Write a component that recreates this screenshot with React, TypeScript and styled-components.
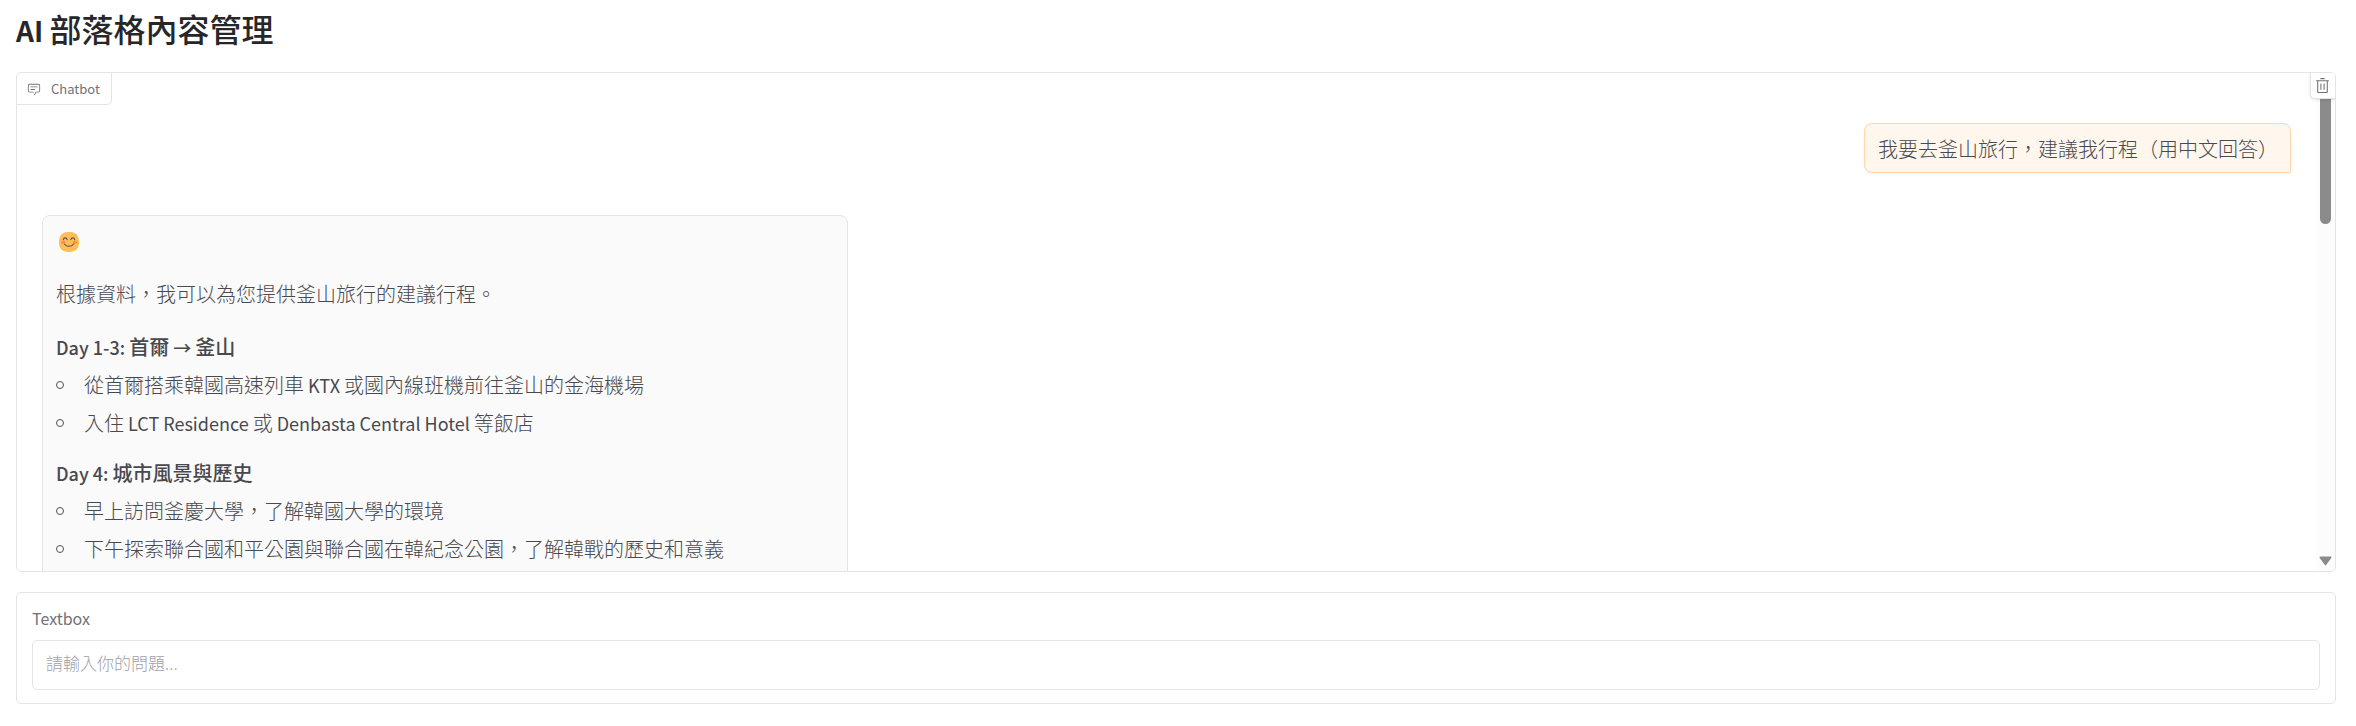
import React from "react";
import styled, { createGlobalStyle } from "styled-components";

const GlobalStyle = createGlobalStyle`
  *, *::before { box-sizing: border-box; }
  body {
    margin: 0;
    background: #fff;
    color: #27272a;
    font-family: "Noto Sans CJK TC", "Noto Sans", sans-serif;
    font-size: 20px;
  }
`;

const Page = styled.main`
  display: flex;
  flex-direction: column;
  gap: 20px;
  padding: 7px 20px 20px 16px;
`;

const Title = styled.h1`
  margin: 0 0 3px;
  font-size: 32px;
  line-height: 42px;
  font-weight: 500;
`;

const TitleLatin = styled.span`
  font-size: 28px;
  line-height: 0;
  font-weight: 600;
`;

const Panel = styled.section`
  position: relative;
  border: 1px solid #e4e4e7;
  border-radius: 5px;
  background: #fff;
  overflow: hidden;
`;

const ChatPanel = styled(Panel)`
  display: flex;
  height: 500px;
`;

const PanelLabel = styled.div`
  position: absolute;
  top: 0;
  left: 0;
  display: flex;
  align-items: center;
  gap: 10px;
  height: 32px;
  padding: 0 11px 0 10px;
  border: solid #e4e4e7;
  border-width: 0 1px 1px 0;
  border-radius: 0 0 5px 0;
  color: #71717a;
  font-size: 13px;
  line-height: 20px;
`;

const ClearButton = styled.button`
  position: absolute;
  top: 0;
  right: 0;
  display: flex;
  align-items: center;
  justify-content: center;
  width: 25px;
  height: 26px;
  padding: 0 2px 0 0;
  border: solid #e4e4e7;
  border-width: 0 0 1px 1px;
  border-radius: 0 0 0 5px;
  background: #fff;
  color: #71717a;
  box-shadow: 0 1px 3px rgba(0, 0, 0, 0.12);
  cursor: pointer;
`;

const Messages = styled.div`
  flex: 1;
  min-width: 0;
  display: flex;
  flex-direction: column;
  gap: 42px;
  padding: 50px 25px 0;
`;

const Bubble = styled.article`
  flex: none;
  padding: 13px 12px 11px 13px;
  border: 1px solid;
  color: #48484f;
  line-height: 24px;
  font-weight: 300;
`;

const UserBubble = styled(Bubble)`
  align-self: flex-end;
  border-color: #fed7aa;
  border-radius: 8px 8px 0 8px;
  background: #fff7ed;
  box-shadow: 0 1px 3px rgba(0, 0, 0, 0.05);
`;

const BotBubble = styled(Bubble)`
  align-self: flex-start;
  width: 100%;
  max-width: 806px;
  padding-bottom: 24px;
  border-color: #e4e4e7;
  border-radius: 8px 8px 8px 0;
  background: #fafafa;
`;

const Face = styled.svg`
  display: block;
  margin: 3px 0 0 3px;
`;

const Paragraph = styled.p`
  margin: 30px 0 0;
`;

const DayTitle = styled.h2`
  margin: 29px 0 0;
  font-size: 20px;
  line-height: 24px;
  font-weight: 500;
`;

const DayList = styled.ul`
  display: flex;
  flex-direction: column;
  gap: 14px;
  margin: 14px 0 -3px;
  padding: 0;
  list-style: none;
`;

const DayItem = styled.li`
  display: flex;
  align-items: center;
  gap: 20px;
  &::before {
    content: "";
    width: 8px;
    height: 8px;
    border: 1px solid #52525b;
    border-radius: 50%;
  }
`;

const Latin = styled.span<{ $strong?: boolean }>`
  font-size: 18px;
  line-height: 0;
  font-weight: ${(p) => (p.$strong ? 500 : 400)};
`;

const ScrollTrack = styled.div`
  flex: none;
  display: flex;
  flex-direction: column;
  justify-content: space-between;
  align-items: center;
  width: 19px;
  padding: 18px 0 5px;
  background: #fcfcfc;
`;

const ScrollThumb = styled.div`
  width: 11px;
  height: 133px;
  border-radius: 6px;
  background: #8b8b8b;
`;

const InputPanel = styled(Panel)`
  display: flex;
  flex-direction: column;
  gap: 12px;
  padding: 15px 15px 13px;
`;

const FieldLabel = styled.label`
  color: #71717a;
  font-size: 16px;
  line-height: 20px;
`;

const TextInput = styled.input`
  width: 100%;
  height: 50px;
  padding: 0 13px 6px;
  border: 1px solid #e4e4e7;
  border-radius: 5px;
  background: #fff;
  color: #27272a;
  font-family: inherit;
  font-size: 17px;
  font-weight: 300;
  &::placeholder { color: #a1a1aa; opacity: 1; }
`;

const ChatIcon = () => (
  <svg width="14" height="14" viewBox="0 0 32 32" fill="currentColor" aria-hidden="true">
    <path d="M17.74 30L16 29l4-7h6a2 2 0 0 0 2-2V8a2 2 0 0 0-2-2H6a2 2 0 0 0-2 2v12a2 2 0 0 0 2 2h9v2H6a4 4 0 0 1-4-4V8a4 4 0 0 1 4-4h20a4 4 0 0 1 4 4v12a4 4 0 0 1-4 4h-4.84Z" />
    <path d="M8 10h16v2H8zm0 6h10v2H8z" />
  </svg>
);

const TrashIcon = () => (
  <svg width="17" height="17" viewBox="0 0 32 32" fill="currentColor" aria-hidden="true">
    <path d="M12 12h2v12h-2zm6 0h2v12h-2z" />
    <path d="M4 6v2h2v20a2 2 0 0 0 2 2h16a2 2 0 0 0 2-2V8h2V6zm4 22V8h16v20zm4-26h8v2h-8z" />
  </svg>
);

const SmilingFace = () => (
  <Face width="20" height="20" viewBox="0 0 20 20" fill="none" role="img" aria-label="smiling face">
    <rect width="20" height="20" rx="8.5" fill="#ffbe55" />
    <circle cx="4.2" cy="10.3" r="1.9" fill="#ff8a5c" />
    <circle cx="15.8" cy="10.3" r="1.9" fill="#ff8a5c" />
    <g stroke="#5c4a50" strokeWidth="1.1" strokeLinecap="round">
      <path d="M4.3 7.6C4.8 5.3 7.6 5.3 8.1 7.6" />
      <path d="M11.9 7.6C12.4 5.3 15.2 5.3 15.7 7.6" />
      <path d="M5.6 12.2C7.6 15 12.4 15 14.4 12.2" />
    </g>
  </Face>
);

const DownArrow = () => (
  <svg width="13" height="10" viewBox="0 0 13 10" aria-hidden="true">
    <path d="M1.5 1.5h10L6.5 8.2Z" fill="#8b8b8b" stroke="#8b8b8b" strokeWidth="2" strokeLinejoin="round" />
  </svg>
);

const days: { id: number; title: React.ReactNode; items: React.ReactNode[] }[] = [
  {
    id: 1,
    title: <><Latin $strong>Day 1-3: </Latin>首爾<Latin $strong> → </Latin>釜山</>,
    items: [
      <>從首爾搭乘韓國高速列車<Latin> KTX </Latin>或國內線班機前往釜山的金海機場</>,
      <>入住<Latin> LCT Residence </Latin>或<Latin> Denbasta Central Hotel </Latin>等飯店</>,
    ],
  },
  {
    id: 4,
    title: <><Latin $strong>Day 4: </Latin>城市風景與歷史</>,
    items: [
      "早上訪問釜慶大學，了解韓國大學的環境",
      "下午探索聯合國和平公園與聯合國在韓紀念公園，了解韓戰的歷史和意義",
    ],
  },
];

export default function App() {
  return (
    <>
      <GlobalStyle />
      <Page lang="zh-Hant">
        <Title><TitleLatin>AI </TitleLatin>部落格內容管理</Title>
        <ChatPanel>
          <Messages>
            <UserBubble>我要去釜山旅行，建議我行程（用中文回答）</UserBubble>
            <BotBubble>
              <SmilingFace />
              <Paragraph>根據資料，我可以為您提供釜山旅行的建議行程。</Paragraph>
              {days.map((day) => (
                <React.Fragment key={day.id}>
                  <DayTitle>{day.title}</DayTitle>
                  <DayList>
                    {day.items.map((item, i) => (
                      <DayItem key={i}><span>{item}</span></DayItem>
                    ))}
                  </DayList>
                </React.Fragment>
              ))}
            </BotBubble>
          </Messages>
          <ScrollTrack>
            <ScrollThumb />
            <DownArrow />
          </ScrollTrack>
          <PanelLabel>
            <ChatIcon />
            <span>Chatbot</span>
          </PanelLabel>
          <ClearButton type="button" aria-label="Clear">
            <TrashIcon />
          </ClearButton>
        </ChatPanel>
        <InputPanel>
          <FieldLabel htmlFor="question">Textbox</FieldLabel>
          <TextInput id="question" type="text" placeholder="請輸入你的問題..." />
        </InputPanel>
      </Page>
    </>
  );
}
